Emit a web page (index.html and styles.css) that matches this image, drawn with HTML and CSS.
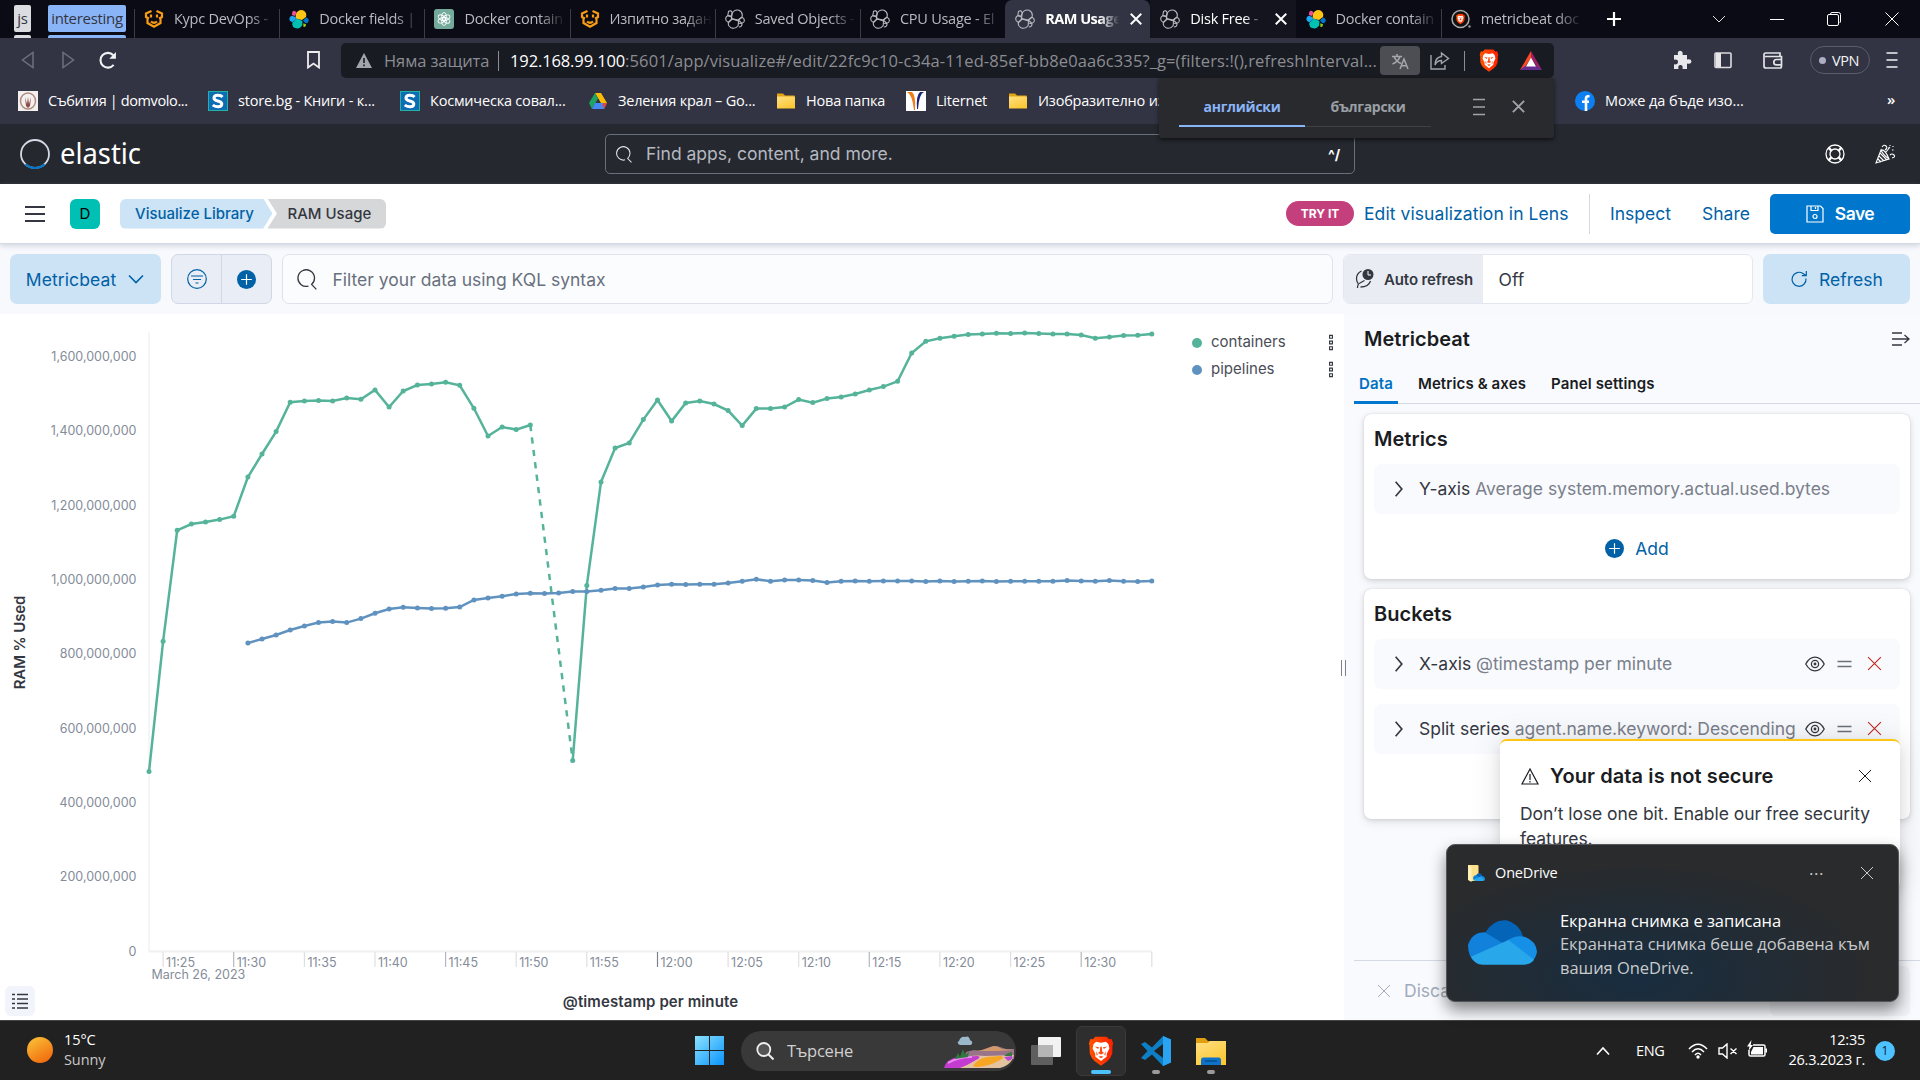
FILE: index.html
```html
<!DOCTYPE html>
<html lang="bg">
<head>
<meta charset="utf-8">
<title>RAM Usage - Elastic</title>
<link rel="stylesheet" href="styles.css">
</head>
<body>
<svg class="defs" width="0" height="0">
  <defs>
    <linearGradient id="gBrave" x1="0" y1="0" x2="1" y2="0"><stop offset="0" stop-color="#ff5500"/><stop offset="1" stop-color="#ff2000"/></linearGradient>
    <linearGradient id="gFolder" x1="0" y1="0" x2="0.6" y2="1"><stop offset="0" stop-color="#ffe083"/><stop offset="1" stop-color="#fcc834"/></linearGradient>
    <linearGradient id="gWin" x1="0" y1="0" x2="1" y2="1"><stop offset="0" stop-color="#8be2ff"/><stop offset="1" stop-color="#0a94fb"/></linearGradient>
    <symbol id="x" viewBox="0 0 16 16"><path d="M2 2l12 12M14 2L2 14" fill="none" stroke="currentColor"/></symbol>
    <symbol id="softuni" viewBox="0 0 20 20"><path d="M7.500 2L2 4.500V8L5 9.500M12.500 2L18 4.500V8L15 9.500M3.500 9.500V14L10 17.800 16.500 14V9.500M7 5.500V8.500M13 5.500V8.500M7 12.500Q10 15 13 12.500" fill="none" stroke="#f79c13" stroke-width="2.200"/></symbol>
    <symbol id="elastic" viewBox="0 0 20 20"><path d="M6.500 9.500L7 4.500Q9.500 0 14 1.200 18.300 3.200 17 8L13 11z" fill="#fec514"/><path d="M3.500 2.500Q6 .5 7.500 4L6 7 2.800 6Z" fill="#f04e98"/><path d="M.3 10Q.5 7.300 3 6.800L6.500 8 7 10.500 3.200 13.300Q.5 12.500.3 10" fill="#1ba9f5"/><path d="M3.500 13.500L8 9.500 13.500 12 13.200 16.500Q10.500 20.500 6 19 2.500 17.500 3.500 13.500" fill="#00bfb3"/><path d="M14 11.500L17 8.500Q20 9.500 19.700 12 19 14.500 16.500 14.200z" fill="#0077cc"/><path d="M14.200 14.200L17 15.200Q17.200 18 14.500 18z" fill="#93c90e"/></symbol>
    <symbol id="elasticline" viewBox="0 0 20 20"><g fill="none" stroke="#b8b9bf" stroke-width="1.100"><path d="M6.500 9.500L7 4.500Q9.500 0 14 1.200 18.300 3.200 17 8L13 11z"/><path d="M3.500 2.500Q6 .5 7.300 4L6.500 7 2.800 6.500Z"/><path d="M.7 10Q.8 7.300 3 6.800L6.500 8 7 10 3.200 13.300Q.8 12.500.7 10"/><path d="M3.500 13.500L7 10 13.500 12 13.200 16.500Q10.500 20.500 6 18.800 2.500 17 3.500 13.500"/><path d="M13.500 11.200L17 8.300Q19.700 9.500 19.300 12 19 14.200 16.500 14z"/><path d="M13.500 14.200L17 14.500Q17.200 17.800 13.800 18"/></g></symbol>
    <symbol id="lion" viewBox="0 0 20 24"><path d="M5.500.5h9L16.500 2.500l2-.2L19.700 6l-.5 1.500L19 14q-1 3.500-4 6.200L10 23.700 5 20.200Q2 17.500 1 14L.800 7.500.300 6 1.500 2.300l2 .2z" fill="url(#gBrave)"/><path d="M4 6.500L6 4.500l4 .8 4-.8 2 2 .7 3.500-2 4-.2 2.500-4.500 3.500-4.500-3.500-.2-2.500-2-4z" fill="#fff"/><path d="M5 8.300l3.500.6-.8 1.500zM15 8.300l-3.500.6.8 1.500zM9.400 8.500h1.200l.4 4 1.500 1-2.500 1.200-2.500-1.200 1.500-1zM6 12l1.500 3-1 .5zM14 12l-1.500 3 1 .5zM8 16.500l2 1.200 2-1.200-2-.6z" fill="#ff4a12"/></symbol>
    <symbol id="folder" viewBox="0 0 20 20"><path d="M1 2.500h6l2 2h9.500V11H1z" fill="#e3a411"/><path d="M1 5.500h18V17.500H1z" fill="url(#gFolder)"/></symbol>
    <symbol id="sbg" viewBox="0 0 20 20"><rect width="20" height="20" fill="#1fb4a6"/><rect x="1" y="1" width="18" height="18" fill="#0e6cb5"/><path d="M14.500 6Q13 4.200 10 4.200 6 4.200 6 7q0 2.200 3.800 3 4 .8 4 3 0 2.700-4 2.700-3.200 0-5-1.700" fill="none" stroke="#fff" stroke-width="3"/></symbol>
    <symbol id="search" viewBox="0 0 16 16"><path d="M9.500 13A6.300 6.300 0 1 1 11.800 11.800M11.500 11.300L15.500 15.500" fill="none" stroke="currentColor"/></symbol>
    <symbol id="plusc" viewBox="0 0 16 16"><circle cx="8" cy="8" r="8" fill="#0061a6"/><path d="M8 3.500v9M3.500 8h9" stroke="#fff"/></symbol>
    <symbol id="eye" viewBox="0 0 20 20"><g fill="none" stroke="currentColor" stroke-width="1.300"><path d="M.8 10Q4.500 3.200 10 3.200T19.200 10Q15.500 16.800 10 16.800T.8 10z"/><circle cx="10" cy="10" r="3.600"/><circle cx="10" cy="10" r=".8"/></g></symbol>
    <symbol id="grab" viewBox="0 0 16 16"><path d="M1 5.500h14M1 10.500h14" stroke="#69707d" stroke-width="1.700"/></symbol>
    <symbol id="chev" viewBox="0 0 16 16"><path d="M5 1.500l5.500 6.500L5 14.500" fill="none" stroke="currentColor" stroke-width="1.500"/></symbol>
    <symbol id="boxes" viewBox="0 0 6 18"><path d="M1.500 1.500h3v3h-3zM1.500 7.500h3v3h-3zM1.500 13.500h3v3h-3z" fill="none" stroke="#343741" stroke-width="1.200"/></symbol>
    <symbol id="cloud" viewBox="0 0 70 46"><path d="M17 14Q25 0 39 1 52 4 56 18L40 32 12 28z" fill="#0364b8"/><path d="M42 28L17 13Q4 13 0 26 0 38 7 43L50 34z" fill="#1181dc"/><path d="M39 22Q49 15 58 18 69 22 70 33 69 39 65 43L50 36z" fill="#1590e6"/><path d="M3 38L41 21 67 41Q63 46 57 46H15Q7 46 3 38" fill="#28a8ea"/></symbol>
  </defs>
</svg>

<header class="browser">
  <div class="tabstrip">
    <div class="group group-js"><span>js</span></div>
    <div class="group group-int"><span>interesting</span></div>
    <div class="tabs">
      <div class="tab"><svg><use href="#softuni"/></svg><span>Курс DevOps - </span></div>
      <div class="tab"><svg><use href="#elastic"/></svg><span>Docker fields | M</span></div>
      <div class="tab"><svg viewBox="0 0 20 20"><rect width="20" height="20" rx="3" fill="#74aa9c"/><g fill="none" stroke="#fff" stroke-width=".9"><ellipse cx="10" cy="7.500" rx="2.400" ry="4"/><ellipse cx="10" cy="7.500" rx="2.400" ry="4" transform="rotate(60 10 10)"/><ellipse cx="10" cy="7.500" rx="2.400" ry="4" transform="rotate(120 10 10)"/><ellipse cx="10" cy="7.500" rx="2.400" ry="4" transform="rotate(180 10 10)"/><ellipse cx="10" cy="7.500" rx="2.400" ry="4" transform="rotate(240 10 10)"/><ellipse cx="10" cy="7.500" rx="2.400" ry="4" transform="rotate(300 10 10)"/></g></svg><span>Docker contain</span></div>
      <div class="tab"><svg><use href="#softuni"/></svg><span>Изпитно задан</span></div>
      <div class="tab"><svg><use href="#elasticline"/></svg><span>Saved Objects -</span></div>
      <div class="tab"><svg><use href="#elasticline"/></svg><span>CPU Usage - El</span></div>
      <div class="tab active"><svg><use href="#elasticline"/></svg><span>RAM Usage</span><svg class="close"><use href="#x"/></svg></div>
      <div class="tab hover"><svg><use href="#elasticline"/></svg><span>Disk Free -</span><svg class="close"><use href="#x"/></svg></div>
      <div class="tab"><svg><use href="#elastic"/></svg><span>Docker contain</span></div>
      <div class="tab"><svg viewBox="0 0 20 20"><circle cx="9.500" cy="10" r="8.500" fill="#111" stroke="#aaa" stroke-width="1.500"/><use href="#lion" x="5" y="4.500" width="9" height="11"/><circle cx="18.500" cy="17.500" r="1.200" fill="#999"/></svg><span>metricbeat doc</span></div>
    </div>
    <svg class="newtab" viewBox="0 0 16 16"><path d="M8 1v14M1 8h14" stroke="#fff" stroke-width="2.200"/></svg>
    <div class="winctl">
      <svg viewBox="0 0 16 16"><path d="M2 5l6 6 6-6" fill="none" stroke="#ddd"/></svg>
      <svg viewBox="0 0 16 16"><path d="M1 8.500h14" stroke="#fff"/></svg>
      <svg viewBox="0 0 16 16"><path d="M4.500 3.500V3q0-1.500 1.500-1.500h6.500q2 0 2 2V10q0 1.500-1 2" fill="none" stroke="#fff"/><rect x="1.500" y="3.500" width="11" height="11" rx="1.500" fill="none" stroke="#fff"/></svg>
      <svg viewBox="0 0 16 16"><path d="M1.500 1.500l13 13M14.500 1.500l-13 13" stroke="#fff"/></svg>
    </div>
  </div>

  <div class="toolbar">
    <svg class="nav" viewBox="0 0 16 18"><path d="M13 1.500v15L2.500 9z" fill="none" stroke="#6d6f7b" stroke-width="1.500"/></svg>
    <svg class="nav fwd" viewBox="0 0 16 18"><path d="M3 1.500v15L13.500 9z" fill="none" stroke="#6d6f7b" stroke-width="1.500"/></svg>
    <svg class="reload" viewBox="0 0 18 18"><path d="M14.800 13.200A7 7 0 1 1 14.500 4" fill="none" stroke="#f2f2f5" stroke-width="2"/><path d="M17 1v6.300h-6.300z" fill="#f2f2f5"/></svg>
    <svg class="bm" viewBox="0 0 14 18"><path d="M1.500 1h11v15.500L7 12.500l-5.500 4z" fill="none" stroke="#eee" stroke-width="1.800"/></svg>
    <div class="omni">
      <svg class="warn" viewBox="0 0 16 15"><path d="M8 0l8 15H0z" fill="#a2a5ab"/><path d="M8 5v5M8 11.500v1.800" stroke="#191b22" stroke-width="1.600"/></svg>
      <span class="nosec">Няма защита</span><i class="bar"></i>
      <span class="url"><b>192.168.99.100</b>:5601/app/visualize#/edit/22fc9c10-c34a-11ed-85ef-bb8e0aa6c335?_g=(filters:!(),refreshInterval...</span>
      <span class="trans"><svg viewBox="0 0 18 18"><path d="M1 4.500h10M6 2v2.500M3 4.500Q5 9.500 10 11.500M9 4.500Q7.500 9.500 1.500 12M9 17l4-10 4 10M10.500 13.700h5" fill="none" stroke="#a6a7ab" stroke-width="1.500"/></svg></span>
      <svg class="share" viewBox="0 0 20 20"><path d="M1 4v14h14v-4M11.500 2l7 5.500-7 5V9.500Q7 9.500 5 14 5 6.500 11.500 5.500z" fill="none" stroke="#a2a4aa" stroke-width="1.400"/></svg>
      <i class="bar b2"></i>
      <svg class="lion"><use href="#lion"/></svg>
      <svg class="bat" viewBox="0 0 22 19"><path d="M11 0L0 19l5-3 6-9z" fill="#ff4724"/><path d="M11 0l11 19-5-3-6-9z" fill="#9e1f63"/><path d="M0 19h22l-5-4H5z" fill="#662d91"/><path d="M11 6.500l5 9H6z" fill="#fff"/></svg>
    </div>
    <div class="ext">
      <svg viewBox="0 0 20 20"><path d="M2 5h4q-1-4 2-4.300 3.500.3 2.500 4.300H15v4.500q4-1.200 4.500 2-.5 3.300-4.500 2V19h-4.500q.8-4-2-4-3 0-2 4H2v-4.700q4 .5 4-2.300T2 9.700z" fill="#e8e8ec"/></svg>
      <svg viewBox="0 0 20 20"><rect x="2" y="3" width="16" height="14.500" rx="1" fill="none" stroke="#dcdce0" stroke-width="1.600"/><path d="M3 3h5v14H3z" fill="#e6e6ea"/></svg>
      <svg viewBox="0 0 20 20"><path d="M17 6V3H2.500Q1 3 1 5v11q0 2 2 2h14q1.500 0 1.500-2V6.500H2M19 9.500h-5.500a2.700 2.700 0 0 0 0 5.400H19" fill="none" stroke="#e3e3e8" stroke-width="1.700"/></svg>
      <span class="vpn"><i></i>VPN</span>
      <svg class="menu" viewBox="0 0 12 18"><path d="M.5 2h11M.5 9h11M.5 16h11" stroke="#f2f2f5" stroke-width="1.500"/></svg>
    </div>
  </div>

  <div class="bookmarks">
    <div style="width:190px"><svg viewBox="0 0 20 20"><rect width="20" height="20" fill="#f4f0ee"/><ellipse cx="10" cy="10" rx="7.500" ry="8" fill="none" stroke="#b08d88" stroke-width="1.500"/><path d="M7 6l2 7 1-7 1 7 2-7-1 9-2 2-2-2z" fill="#8a4d48"/></svg><span class="tight">Събития | domvolo...</span></div>
    <div style="width:192px"><svg><use href="#sbg"/></svg><span>store.bg - Книги - к...</span></div>
    <div style="width:188px"><svg><use href="#sbg"/></svg><span>Космическа совал...</span></div>
    <div style="width:188px"><svg viewBox="0 0 20 20"><path d="M7 2h6l6 10h-6z" fill="#fbbc04"/><path d="M7 2l3 5.500L4 18l-3-6z" fill="#1ea362"/><path d="M4 18l3-6h12l-3 6z" fill="#4688f4"/><path d="M16 18l3-6h-3.500l-1 1.500z" fill="#ea4335"/></svg><span>Зеления крал – Go...</span></div>
    <div style="width:130px"><svg><use href="#folder"/></svg><span>Нова папка</span></div>
    <div style="width:102px"><svg viewBox="0 0 20 20"><rect width="20" height="20" fill="#fff"/><path d="M1 1q5 2 7 18h1Q10 4 6 1z" fill="#ef7d1a"/><path d="M18 1q-5 2-6 17h-1Q10 4 14 1z" fill="#1c2577"/></svg><span>Liternet</span></div>
    <div style="width:567px"><svg><use href="#folder"/></svg><span>Изобразително из</span></div>
    <div style="width:312px"><svg viewBox="0 0 20 20"><circle cx="10" cy="10" r="10" fill="#0c7ff2"/><path d="M14.500 5.300H13q-2 0-2 2.200V20M7 10.800h7" fill="none" stroke="#fff" stroke-width="2.600"/></svg><span class="wide">Може да бъде изо...</span></div>
    <b>»</b>
  </div>

  <div class="translate">
    <span class="lang on">английски</span><span class="lang">български</span>
    <svg class="tmenu" viewBox="0 0 14 18"><path d="M1 1.500h12M1 9h12M1 16.500h12" stroke="#a0a3a8" stroke-width="1.500"/></svg>
    <svg class="tclose"><use href="#x"/></svg>
  </div>
</header>

<section class="kheader">
  <svg class="ring" viewBox="0 0 30 30"><circle cx="15" cy="15" r="14" fill="none" stroke="#d3dae6" stroke-width="1.800"/><path d="M5.500 25.300A14 14 0 0 0 24.500 25.300" fill="none" stroke="#07c" stroke-width="2.200"/></svg>
  <svg class="word" width="84" height="40"><text x="0" y="30" textLength="81" lengthAdjust="spacingAndGlyphs">elastic</text></svg>
  <div class="ksearch"><svg><use href="#search"/></svg><span>Find apps, content, and more.</span><b>^/</b></div>
  <div class="kicons">
    <svg viewBox="0 0 20 20"><g fill="none" stroke="#fff" stroke-width="1.300"><circle cx="10" cy="10" r="9"/><circle cx="10" cy="10" r="5"/><path d="M4 3l3 4M3 4l3 3M16 3l-3 4M17 4l-3 3M4 17l3-4M3 16l3-3M16 17l-3-4M17 16l-3-3"/></g></svg>
    <svg viewBox="0 0 20 20"><g fill="none" stroke="#fff" stroke-width="1.100"><path d="M1 19L6 6q2 5 8 9zM4 12l5 5M5 9l7 7M3 15l3 3M6 6q4-1 8 9M7 3q2-3 4-1t-1 4M11 8l4-5M15 11q2-2 4 0t-2 3"/><path d="M15 1v1M18 2v1M17 6h2M13 4h1" stroke-dasharray="1.500 1"/></g></svg>
  </div>
</section>

<section class="knav">
  <svg class="burger" viewBox="0 0 20 18"><path d="M0 2h20M0 9h20M0 16h20" stroke="#343741" stroke-width="2"/></svg>
  <span class="avatar">D</span>
  <div class="crumbs"><a class="c1">Visualize Library</a><a class="c2">RAM Usage</a></div>
  <span class="tryit">TRY IT</span>
  <a class="edit">Edit visualization in Lens</a><i class="vsep"></i>
  <a class="insp">Inspect</a><a class="shr">Share</a>
  <button class="save"><svg viewBox="0 0 18 18"><path d="M1 1h13.500L17 3.500V17H1zM5 1v4.500h7V1M9.500 2v2" fill="none" stroke="#fff" stroke-width="1.200"/><circle cx="9" cy="11.500" r="2" fill="none" stroke="#fff" stroke-width="1.200"/></svg>Save</button>
</section>

<section class="query">
  <button class="dv">Metricbeat<svg viewBox="0 0 16 16"><path d="M1 4.500l7 7 7-7" fill="none" stroke="currentColor" stroke-width="1.600"/></svg></button>
  <div class="fgroup"><span><svg viewBox="0 0 20 20"><g fill="none" stroke="#0061a6" stroke-width="1.200"><circle cx="10" cy="10" r="9.300"/><path d="M4 7h12M6 10.500h8M8.500 14h3"/></g></svg></span><span><svg class="pl"><use href="#plusc"/></svg></span></div>
  <div class="kql"><svg><use href="#search"/></svg>Filter your data using KQL syntax</div>
  <div class="auto"><span><svg viewBox="0 0 18 20"><circle cx="12.500" cy="5.500" r="5.500" fill="#343741"/><path d="M12.500 2v4h3" fill="none" stroke="#fff"/><path d="M6 2Q1 4.500 1 9.500q0 3 1.500 5M2 19q0-4 2.500-5L9 11.500M5 18q8 0 10-6" fill="none" stroke="#343741" stroke-width="1.300"/></svg>Auto refresh</span><em>Off</em></div>
  <button class="refresh"><svg viewBox="0 0 18 18"><path d="M16 8.500a7 7 0 1 1-3-5L16 5.500M16.300 1v4.700h-4.500" fill="none" stroke="currentColor" stroke-width="1.200"/></svg>Refresh</button>
</section>

<main class="body">
  <div class="vis">
    <svg id="chart" width="1180" height="706"></svg>
    <div class="legend">
      <div><i></i><span>containers</span><svg><use href="#boxes"/></svg></div>
      <div><i class="blue"></i><span>pipelines</span><svg><use href="#boxes"/></svg></div>
    </div>
    <div class="listbtn"><svg viewBox="0 0 16 16"><path d="M0 1.500h3M5 1.500h11M0 6h3M5 6h11M0 10.500h3M5 10.500h11M0 15h3M5 15h11" stroke="#343741" stroke-width="1.300"/></svg></div>
    <i class="handle"></i>
  </div>
  <aside class="side">
    <div class="sidehead"><h2>Metricbeat</h2><svg viewBox="0 0 18 16"><path d="M0 2h10M0 8h16M0 14h10M12.500 4l4.500 4-4.500 4" fill="none" stroke="#343741" stroke-width="1.300"/></svg></div>
    <nav class="stabs"><a class="on">Data</a><a>Metrics &amp; axes</a><a>Panel settings</a></nav>
    <div class="panel p1">
      <h3>Metrics</h3>
      <div class="row"><svg class="cv"><use href="#chev"/></svg><span>Y-axis <em>Average system.memory.actual.used.bytes</em></span></div>
      <div class="add"><svg><use href="#plusc"/></svg>Add</div>
    </div>
    <div class="panel p2">
      <h3>Buckets</h3>
      <div class="row"><svg class="cv"><use href="#chev"/></svg><span>X-axis <em>@timestamp per minute</em></span><svg class="ey"><use href="#eye"/></svg><svg class="gr"><use href="#grab"/></svg><svg class="rx"><use href="#x"/></svg></div>
      <div class="row r2"><svg class="cv"><use href="#chev"/></svg><span>Split series <em>agent.name.keyword: Descending</em></span><svg class="ey"><use href="#eye"/></svg><svg class="gr"><use href="#grab"/></svg><svg class="rx"><use href="#x"/></svg></div>
    </div>
    <footer class="sfoot"><svg><use href="#x"/></svg><span>Discard</span><i></i></footer>
  </aside>
</main>

<div class="toast">
  <div class="thead"><svg class="tw" viewBox="0 0 18 17"><path d="M9 1l8 15H1zM9 6v6M9 13v1.500" fill="none" stroke="#1a1c21" stroke-width="1.200"/></svg><b>Your data is not secure</b><svg class="tx"><use href="#x"/></svg></div>
  <p>Don’t lose one bit. Enable our free security features.</p>
</div>

<div class="onedrive">
  <div class="ohead"><svg viewBox="0 0 17 18"><path d="M0 1h9.500q1 0 1 1v15H2z" fill="#ffe08a"/><path d="M0 1l3.500 2v15L0 16z" fill="#fff0b8"/><use href="#cloud" x="5" y="9" width="12" height="8"/></svg><span>OneDrive</span><i>···</i><svg class="ox"><use href="#x"/></svg></div>
  <div class="obody"><svg><use href="#cloud"/></svg><p><b>Екранна снимка е записана</b><br>Екранната снимка беше добавена към<br>вашия OneDrive.</p></div>
</div>

<footer class="taskbar">
  <i class="sun"></i><div class="wx">15°C<br><em>Sunny</em></div>
  <svg class="start" viewBox="0 0 29 29"><path d="M0 0h14v14H0zM15 0h14v14H15zM0 15h14v14H0zM15 15h14v14H15z" fill="url(#gWin)"/></svg>
  <div class="tsearch"><svg class="mag" viewBox="0 0 18 18"><circle cx="7.800" cy="7.500" r="6.500" fill="#555" stroke="#eee" stroke-width="1.800"/><path d="M12.500 12.500l5 5" stroke="#eee" stroke-width="2"/></svg><span>Търсене</span>
    <svg class="scene" viewBox="0 0 70 32"><path d="M15 5q2-5 6-4 4-2 5 3 4 2 1 5H16q-4-2-1-4" fill="#9cb8cb"/><path d="M22 16l8-2 6 1 10-4q5-2 10 0l6 2 8 0v10H20z" fill="#9a7488"/><path d="M32 15l6-1 12-4q4 0 8 3l12 1-16 1z" fill="#d29a6b"/><path d="M5 26q18-8 36-6l29-1-2 5q-4 6-12 8H2z" fill="#e3c3a0"/><path d="M0 32q2-9 14-11l20-1q4 1-2 4Q24 29 16 32z" fill="#c33bd0"/><path d="M4 27q10-6 24-6" stroke="#ed8ef2" stroke-width="2" fill="none"/><path d="M29 30q4-7 14-9l14-1q5 1-1 4-12 7-24 7z" fill="#f6a623"/><path d="M11 23l3-6 2 4 3-8 2 6 4-3-1 5z" fill="#2f7a3f"/><path d="M60 21l8-1q2 3-4 5z" fill="#b848d6"/><path d="M60 20l4-3 4-1v4z" fill="#3a7a40"/></svg>
  </div>
  <svg class="tv" viewBox="0 0 30 28"><rect x="7" width="23" height="20" rx="1" fill="#f2f2f2"/><rect y="8" width="22" height="20" rx="1" fill="#666" fill-opacity=".9"/><path d="M7 8h15v12H7z" fill="#b5b5b5"/></svg>
  <div class="app act"><svg class="l"><use href="#lion"/></svg><i></i></div>
  <div class="app"><svg viewBox="0 0 30 30"><path d="M22 0l8 3.500v23L22 30 11 18.500 4 24 0 22l6.500-7L0 8l4-2 7 5.500z" fill="#0d7fc7"/><path d="M22 8v14l-9-7z" fill="#212121"/><path d="M22 0l8 3.500v23L22 30z" fill="#2aa4f0"/></svg><i></i></div>
  <div class="app"><svg viewBox="0 0 30 28"><path d="M0 1h9l3 3h4v8H0z" fill="#e09f10"/><path d="M0 6h12l2-2h16v24H0z" fill="url(#gFolder)"/><path d="M5 28v-5q0-2.500 2-2.500h16q2 0 2 2.500v5z" fill="#0d72c8"/><path d="M9 24h12" stroke="#04467f" stroke-width="1.200"/></svg><i></i></div>
  <div class="tray">
    <svg class="up" viewBox="0 0 14 10"><path d="M1 8.500l6-6.500 6 6.500" fill="none" stroke="#fff" stroke-width="1.600"/></svg>
    <span class="eng">ENG</span>
    <svg class="wifi" viewBox="0 0 20 16"><g fill="none" stroke="#fff" stroke-width="1.500"><path d="M1 6q9-9.500 18 0M4 9q6-6.500 12 0M7 12q3-3.500 6 0"/></g><circle cx="10" cy="14" r="1.700" fill="#fff"/></svg>
    <svg class="vol" viewBox="0 0 20 16"><path d="M1 5h3.500L9 1v14L4.500 11H1zM12.500 5.500l6 5.500M18.500 5.500l-6 5.500" fill="none" stroke="#fff" stroke-width="1.400"/></svg>
    <svg class="bt" viewBox="0 0 20 18"><path d="M6 5h10.500q1.500 0 1.500 1.500v8q0 1.500-1.500 1.500H3.500Q2 16 2 14.500V10" fill="none" stroke="#fff" stroke-width="1.500"/><path d="M6.500 7H16v7.500H4V12zM18.500 8.500H20v4h-1.500zM4.500 0L0 6.500h2.500L1.500 11 6 5H3.700z" fill="#fff"/></svg>
    <div class="clock">12:35<br>26.3.2023 г.</div>
    <span class="badge">1</span>
  </div>
</footer>
<script src="chart.js"></script>
</body>
</html>
```
FILE: styles.css
```css
* { box-sizing: border-box; }
body { margin: 0; width: 1920px; height: 1080px; overflow: hidden; font-family: Inter, sans-serif; font-size: 17.5px; color: #343741; background: #fff; display: flex; flex-direction: column; position: relative; }
svg { flex: none; display: block; }
i, em { font-style: normal; }
.defs { position: absolute; }
button { border: 0; padding: 0; font: inherit; display: flex; align-items: center; justify-content: center; }
h2, h3, p { margin: 0; }

/* browser chrome */
.browser, .taskbar, .onedrive { font-family: "Open Sans", "Noto Sans", sans-serif; }
.browser { height: 124px; background: #323443; position: relative; flex: none; }
.tabstrip { height: 38px; background: #0b0b15; display: flex; padding-left: 14px; }
.group { margin-top: 5px; height: 33px; font-size: 15px; color: #33353f; letter-spacing: -.3px; text-align: center; }
.group span { display: block; height: 27px; line-height: 26px; border-radius: 2px; margin-bottom: 3px; }
.group::after { content: ""; display: block; height: 3px; border-radius: 2px 2px 0 0; }
.group-js { width: 17px; margin-right: 17px; }
.group-js span, .group-js::after { background: #dadce0; }
.group-int { width: 78px; margin-right: 8px; }
.group-int span, .group-int::after { background: #8ab4f8; }
.tabs { display: flex; width: 1452px; }
.tab { width: 145.2px; height: 38px; display: flex; align-items: center; padding-left: 10px; position: relative; color: #b9bac2; font-size: 14.5px; letter-spacing: -.25px; }
.tab::before { content: ""; position: absolute; left: 0; top: 9px; bottom: 0; width: 1px; background: #3c3c46; }
.tab svg { width: 20px; height: 20px; margin-right: 10px; }
.tab span { width: 104px; padding-bottom: 1px; white-space: nowrap; -webkit-mask-image: linear-gradient(90deg, #000 72%, transparent 98%); mask-image: linear-gradient(90deg, #000 72%, transparent 98%); }
.tab.active { background: #323443; border-radius: 7px 7px 0 0; color: #fff; font-weight: 700; letter-spacing: -.5px; }
.tab.hover { background: #14141f; color: #fff; }
.tab.active::before, .tab.hover::before, .tab.hover + .tab::before { display: none; }
.tab.active span, .tab.hover span { width: 76px; }
.tab .close { width: 14px; height: 14px; margin: 0 0 0 8px; color: #fff; stroke-width: 2.2; }
.newtab { width: 16px; height: 16px; margin: 11px 0 0 20px; }
.winctl { display: flex; margin: 11px 0 0 89px; gap: 41.5px; }
.winctl svg { width: 16px; height: 16px; }

.toolbar { height: 44px; display: flex; align-items: center; padding-left: 20px; }
.nav { width: 16px; height: 18px; }
.nav.fwd { margin-left: 24px; }
.reload { width: 19px; height: 19px; margin-left: 22px; }
.bm { width: 15px; height: 18px; margin-left: 189px; }
.omni { width: 1213px; height: 35px; margin-left: 20px; margin-top: 1px; background: #191b22; border-radius: 5px; display: flex; align-items: center; font-size: 16.5px; padding-left: 15px; color: #8b8d93; white-space: nowrap; }
.warn { width: 16px; height: 15px; }
.nosec { margin-left: 12px; width: 105px; letter-spacing: -.08px; }
.bar { width: 1px; height: 20px; background: #8b8d93; margin: 0 11px 0 9px; }
.url { width: 870px; letter-spacing: .11px; }
.url b { font-weight: 400; color: #fff; letter-spacing: -.12px; }
.trans { width: 40px; height: 29px; border-radius: 4px; background: #4d4e54; display: flex; align-items: center; justify-content: center; }
.trans svg { width: 18px; height: 18px; }
.share { width: 20px; height: 20px; margin-left: 10px; }
.b2 { margin: 0 14px 0 14px; }
.omni .lion { width: 20px; height: 23px; }
.bat { width: 22px; height: 19px; margin-left: 21px; }
.ext { display: flex; align-items: center; margin-left: 118px; }
.ext svg { width: 20px; height: 20px; margin-right: 21px; }
.ext svg:nth-child(2) { margin-right: 30px; }
.ext svg:nth-child(3) { margin-right: 27px; }
.vpn { width: 60px; height: 28px; border: 1px solid #595b6e; border-radius: 14px; display: flex; align-items: center; font-size: 14.5px; color: #f4f4f6; letter-spacing: -.4px; }
.vpn i { width: 7px; height: 7px; border-radius: 50%; background: #adadc4; margin: 0 6px 0 8px; }
.ext .menu { width: 12px; height: 18px; margin: 0 0 0 16px; }

.bookmarks { height: 42px; display: flex; align-items: center; padding: 0 0 5px 18px; font-size: 14.5px; color: #fff; white-space: nowrap; letter-spacing: -.2px; }
.bookmarks div { display: flex; align-items: center; gap: 10px; }
.bookmarks svg { width: 20px; height: 20px; }
.bookmarks span { padding-bottom: 1px; }
.bookmarks .tight { letter-spacing: -.38px; }
.bookmarks .wide { letter-spacing: -.05px; }
.bookmarks b { font-size: 15px; font-weight: 600; padding-bottom: 3px; }
.translate { position: absolute; left: 1159px; top: 78px; width: 395px; height: 60px; background: #292a2d; box-shadow: 0 2px 4px #0009; border-radius: 0 0 3px 3px; display: flex; padding-left: 20px; font-size: 14px; font-weight: 700; z-index: 3; letter-spacing: -.3px; }
.lang { width: 126px; height: 49px; line-height: 58px; text-align: center; color: #9aa0a6; border-bottom: 1px solid #404145; }
.lang.on { color: #8ab4f8; border-bottom: 2px solid #8ab4f8; }
.tmenu { width: 14px; height: 18px; margin: 20px 0 0 41px; }
.tclose { width: 15px; height: 15px; margin: 21px 0 0 25px; color: #a0a3a8; stroke-width: 2; }

/* elastic header */
.kheader { height: 60px; background: #25282f; display: flex; align-items: center; padding-left: 20px; flex: none; }
.ring { width: 30px; height: 30px; }
.word { margin-left: 10px; font-family: "Noto Sans", sans-serif; font-size: 29px; fill: #fff; }
.ksearch { margin-left: 461px; width: 750px; height: 40px; border: 1px solid #69707d; border-radius: 5px; display: flex; align-items: center; color: #b4b8c0; padding-left: 9px; }
.ksearch svg { width: 17px; height: 17px; color: #dfe5ef; }
.ksearch span { margin-left: 14px; width: 682px; padding-bottom: 1px; }
.ksearch b { color: #fff; font-size: 14px; }
.kicons { display: flex; margin-left: 470px; gap: 30px; }
.kicons svg { width: 20px; height: 20px; }

.knav { height: 60px; border-bottom: 1px solid #d3dae6; box-shadow: 0 2px 5px #98a2b366; display: flex; align-items: center; padding-left: 25px; flex: none; position: relative; z-index: 1; background: #fff; }
.burger { width: 20px; height: 18px; }
.avatar { width: 30px; height: 30px; margin-left: 25px; border-radius: 6px; background: #00bfb3; color: #000; font-size: 15px; line-height: 30px; text-align: center; }
.crumbs { display: flex; margin-left: 20px; width: 266px; font-size: 15px; font-weight: 450; letter-spacing: 0; line-height: 30px; }
.c1 { background: #cce4f5; color: #0061a6; width: 153px; padding-left: 15px; border-radius: 6px 0 0 6px; clip-path: polygon(0 0, 94% 0, 100% 50%, 94% 100%, 0 100%); }
.c2 { background: #d6d7d9; color: #343741; width: 119px; margin-left: -5px; padding-left: 20px; border-radius: 0 6px 6px 0; clip-path: polygon(0 0, 100% 0, 100% 100%, 0 100%, 8% 50%); }
.tryit { margin-left: 900px; width: 68px; height: 25px; border-radius: 13px; background: #c4407c; color: #fff; font-size: 12px; font-weight: 700; line-height: 25px; text-align: center; }
.knav > a { color: #0061a6; white-space: nowrap; }
.edit { margin-left: 10px; width: 225px; letter-spacing: .08px; }
.vsep { width: 1px; height: 40px; background: #d3dae6; margin-right: 20px; }
.insp { width: 92px; }
.shr { width: 68px; }
.save { width: 140px; height: 40px; background: #0077cc; color: #fff; border-radius: 5px; font-weight: 600; gap: 11px; letter-spacing: -.5px; }
.save svg { width: 18px; height: 18px; }

.query { height: 70px; background: #f8f9fd; display: flex; padding: 10px; gap: 10px; flex: none; }
.query > * { height: 50px; border-radius: 7px; }
.dv { width: 151px; background: #cce3f5; color: #0061a6; gap: 12px; letter-spacing: .1px; padding-right: 1px; }
.dv svg { width: 16px; height: 16px; }
.fgroup { width: 101px; background: #e9edf5; border: 1px solid #d0d7e6; display: flex; }
.fgroup span { flex: 1; display: flex; align-items: center; justify-content: center; }
.fgroup span + span { border-left: 1px solid #d0d7e6; }
.fgroup svg { width: 20px; height: 20px; }
.fgroup .pl { width: 19px; height: 19px; }
.kql { width: 1051px; border: 1px solid #dde2ee; background: #fbfcfe; display: flex; align-items: center; padding-left: 13px; gap: 15.5px; color: #69707d; }
.kql svg { width: 21px; height: 21px; color: #343741; }
.auto { width: 410px; border: 1px solid #e3e7f0; background: #fff; display: flex; align-items: center; overflow: hidden; }
.auto span { width: 139px; height: 48px; background: #e9edf3; display: flex; align-items: center; padding-left: 11px; gap: 10px; font-size: 15px; font-weight: 600; letter-spacing: -.12px; white-space: nowrap; }
.auto svg { width: 19px; height: 20px; }
.auto em { margin-left: 15.5px; }
.refresh { width: 147px; background: #cce3f5; color: #0061a6; gap: 11px; }
.refresh svg { width: 18px; height: 18px; }

/* body */
.body { display: flex; height: 706px; flex: none; }
.vis { width: 1344px; position: relative; display: flex; }
#chart text { font-size: 12.5px; fill: #848c99; }
#chart .title { font-size: 15px; font-weight: 600; fill: #343741; letter-spacing: .1px; }
#chart .ytitle { letter-spacing: -.1px; }
.legend { padding-top: 14px; width: 160px; font-size: 15px; color: #4a4d57; }
.legend div { display: flex; align-items: center; height: 27px; padding-left: 12px; }
.legend i { width: 10px; height: 10px; border-radius: 50%; background: #54b399; margin: 2px 9px 0 0; }
.legend i.blue { background: #6092c0; }
.legend span { width: 117px; }
.legend svg { width: 6px; height: 17px; margin-top: 2px; }
.listbtn { position: absolute; left: 5px; top: 672px; width: 30px; height: 30px; border-radius: 6px; background: #f1f4fb; display: flex; align-items: center; justify-content: center; }
.listbtn svg { width: 16px; height: 16px; }
.handle { position: absolute; left: 1341px; top: 346px; width: 5px; height: 16px; border: solid #7d828d; border-width: 0 1px; z-index: 2; }
.side { width: 576px; background: #f9fafe; display: flex; flex-direction: column; padding: 0 10px 0 10px; }
.sidehead { display: flex; justify-content: space-between; align-items: center; height: 50px; padding-left: 10px; }
h2, h3 { font-size: 20px; font-weight: 600; color: #1a1c21; line-height: 24px; letter-spacing: .05px; }
.sidehead svg { width: 18px; height: 16px; }
.stabs { display: flex; height: 40px; border-bottom: 1px solid #d3dae6; margin-right: -10px; font-size: 15px; font-weight: 600; color: #1a1c21; line-height: 40px; }
.stabs a { padding: 0 5px; margin-right: 15px; height: 40px; letter-spacing: .12px; }
.stabs .on { color: #0071c2; border-bottom: 3px solid #07c; }
.panel { margin-left: 10px; width: 546px; background: #fff; border-radius: 7px; box-shadow: 0 1px 5px #0000001a, 0 4px 10px #00000014, 0 0 1px #0003; padding: 0 10px; flex: none; }
.p1 { margin-top: 10px; height: 165px; }
.p2 { margin-top: 10px; height: 230px; }
.panel h3 { padding-top: 13px; height: 50px; }
.row { height: 50px; background: #f9fafd; border-radius: 7px; display: flex; align-items: center; padding-left: 16px; color: #343741; white-space: nowrap; }
.row em { color: #7a808c; }
.row > span { width: 386px; margin-left: 11px; letter-spacing: -.02px; padding-bottom: 1px; }
.cv { width: 18px; height: 18px; margin-bottom: 1px; }
.ey { width: 20px; height: 20px; margin-bottom: 1px; }
.gr { width: 17px; height: 16px; margin-left: 11px; margin-bottom: 1px; }
.rx { width: 17px; height: 17px; margin-left: 13px; margin-bottom: 1px; color: #bd271e; }
.r2 { margin-top: 15px; }
.add { height: 68px; display: flex; align-items: center; justify-content: center; gap: 11px; color: #0061a6; }
.add svg { width: 19px; height: 19px; }
.sfoot { margin: auto 0 0; height: 60px; border-top: 1px solid #d3dae6; margin-right: -10px; display: flex; align-items: center; padding-left: 22px; color: #a2abba; }
.sfoot svg { width: 16px; height: 16px; margin-right: 12px; }
.sfoot i { margin-left: auto; margin-right: 10px; width: 140px; height: 50px; background: #f1f2f7; border-radius: 6px; }

.toast { position: absolute; left: 1500px; top: 739px; width: 400px; height: 150px; background: #fff; border-top: 2px solid #fec514; border-radius: 7px; box-shadow: 0 0 30px #0000001f, 0 5px 12px #00000014; padding: 19px 20px; }
.thead { display: flex; align-items: center; height: 32px; color: #1a1c21; font-size: 20px; white-space: nowrap; }
.thead b { width: 307px; margin-left: 11px; font-weight: 600; letter-spacing: .1px; }
.tw { width: 18px; height: 17px; margin-left: 1px; }
.tx { width: 16px; height: 16px; }
.toast p { margin-top: 9px; line-height: 25px; letter-spacing: -.05px; }

.onedrive { position: absolute; left: 1446px; top: 844px; width: 453px; height: 158px; border: 1px solid #55565a; border-radius: 9px; background: radial-gradient(ellipse 230px 110px at 190px 130px, #182d40, transparent), #292b2d; box-shadow: 0 8px 16px #0007; color: #fff; padding: 0 21px; }
.ohead { display: flex; align-items: center; height: 56px; font-size: 14.5px; letter-spacing: -.15px; }
.ohead svg { width: 17px; height: 20px; }
.ohead span { margin-left: 10px; width: 314px; padding-bottom: 1px; }
.ohead i { color: #ccc; width: 37px; font-size: 17px; letter-spacing: .5px; }
.ohead .ox { width: 16px; height: 16px; margin-left: 12.5px; color: #ccc; }
.obody { display: flex; margin-top: 8px; font-size: 16.5px; line-height: 23.5px; color: #c8cacc; white-space: nowrap; }
.obody svg { width: 69px; height: 46px; margin-top: 10px; }
.obody p { margin-left: 23px; letter-spacing: -.05px; margin-top: -.5px; }
.obody b { font-weight: 400; color: #fff; }

.taskbar { height: 60px; background: #222121; border-top: 1px solid #454443; display: flex; align-items: center; padding-left: 27px; color: #fff; font-size: 14.5px; flex: none; }
.sun { width: 26px; height: 26px; border-radius: 50%; background: linear-gradient(150deg, #fbc63a, #ef5f08); margin-bottom: 2px; }
.wx { margin-left: 11px; width: 631px; line-height: 20px; letter-spacing: -.1px; padding-bottom: 2px; }
.wx em { color: #c8c8c8; }
.start { width: 29px; height: 29px; }
.tsearch { width: 275px; height: 40px; border-radius: 20px; background: #3a3939; margin-left: 17px; display: flex; align-items: center; padding-left: 15px; overflow: hidden; font-size: 16.5px; color: #d0d0d0; }
.mag { width: 18px; height: 18px; }
.tsearch span { margin-left: 13px; width: 157px; letter-spacing: -.2px; }
.scene { width: 70px; height: 32px; margin-top: 2px; }
.tv { width: 30px; height: 28px; margin: 0 15px; }
.app { width: 50px; height: 50px; margin-right: 5px; border-radius: 6px; display: flex; flex-direction: column; align-items: center; padding-top: 10px; }
.app svg { width: 30px; height: 30px; }
.app .l { width: 26px; }
.app i { margin-top: 4px; width: 8px; height: 4px; border-radius: 2px; background: #9a9a9a; }
.act { background: #2e2e2e; border: 1px solid #3a3a3a; padding-top: 9px; }
.act i { width: 20px; background: #4cc2ff; }
.tray { display: flex; align-items: center; margin-left: 355px; }
.up { width: 14px; height: 10px; }
.eng { margin-left: 26px; width: 52px; letter-spacing: -.3px; }
.wifi { width: 20px; height: 16px; }
.vol { width: 20px; height: 16px; margin-left: 10px; }
.bt { width: 20px; height: 18px; margin-left: 9px; margin-top: -3px; }
.clock { width: 98px; text-align: right; line-height: 20px; letter-spacing: -.25px; white-space: nowrap; padding-bottom: 2px; }
.badge { width: 20px; height: 20px; border-radius: 50%; background: #4cc2ff; color: #123; font-size: 12px; line-height: 20px; text-align: center; margin-left: 10px; }
```
FILE: chart.js
```js
// Plot area in page pixels relative to the chart's own top-left corner.
const TOP = 314, X0 = 149, STEP = 14.124, BASE = 951.3;
const containers = [771.3,641,530,523.7,521.7,519.3,516,476.7,453.7,431.3,402,400.7,400.3,400.7,397.7,399,389.7,406.7,390.7,384.7,383.7,382,385,408,435.7,426.7,429.3,424.7,null,null,760.3,585.3,481.7,447.7,442.7,419.3,399.7,420.7,402.7,400.7,403.7,410.3,425.3,408.3,408.3,406.7,399.3,402.3,398.3,396.7,393.7,389.7,386.3,381,352.7,341,338,336,334.3,333.7,333,333.3,332.7,333.3,333.7,333.7,334.7,338,336.7,335.3,335,333.7];
const pipelines = [null,null,null,null,null,null,null,642.7,638.7,634.7,629.7,625.7,622.3,621.3,622.3,618.3,613,608.7,607,607.7,608.3,608,606.7,599.7,597.7,596,593.7,593,593.3,592.7,591.3,591.3,590,588.3,588.3,586.7,584.7,584,584.3,584,584,582.7,581,579,581,579.7,579.7,580.3,582.3,581,580.7,581,580.7,580.7,580.7,581.3,580.7,581.3,581,580.7,581.3,581,581,581,581,580.3,580.7,581,580.3,581,581.3,580.7];
const px = i => (X0 + i * STEP).toFixed(1);
const py = y => (y - TOP + 0.3).toFixed(1);
let out = '';
const line = (x1, y1, x2, y2, c, extra = '') => { out += `<line x1="${x1}" y1="${y1}" x2="${x2}" y2="${y2}" stroke="${c}" ${extra}/>`; };
const text = (x, y, s, extra = '') => { out += `<text x="${x}" y="${y}" ${extra}>${s}</text>`; };

line(149, 18, 149, 637, '#eaecf0');
line(149, 637.5, 1152, 637.5, '#eff0f2', 'stroke-width="2"');
for (let v = 0; v <= 8; v++) {
  text(136.5, BASE - TOP - v * 74.33 + 4.2, (v * 2e8).toLocaleString('en-US'), 'text-anchor="end"');
}
for (let k = 0; k <= 14; k++) {
  const m = 25 + k * 5, x = px(1 + k * 5);
  line(x, 638, x, 653, m === 60 ? '#7d828c' : m % 15 === 0 ? '#b4b7bd' : '#dedfe2', 'stroke-width="1.2"');
  if (k < 14) text(+x + 3, 652.5, `${m < 60 ? 11 : 12}:${String(m % 60).padStart(2, '0')}`);
}
text(151.5, 665, 'March 26, 2023');
text(650.5, 693, '@timestamp per minute', 'class="title" text-anchor="middle"');
text(0, 0, 'RAM % Used', 'class="title ytitle" text-anchor="middle" transform="translate(25 328.500) rotate(-90)"');

function series(data, color) {
  let d = '', pen = false, last = null, dots = '';
  data.forEach((y, i) => {
    if (y === null) { pen = false; return; }
    if (!pen && last !== null) line(px(last), py(data[last]), px(i), py(y), color, 'stroke-width="2.5" stroke-dasharray="6.250 6.250"');
    d += `${pen ? 'L' : 'M'}${px(i)} ${py(y)}`;
    dots += `<circle cx="${px(i)}" cy="${py(y)}" r="2.500" fill="${color}"/>`;
    pen = true; last = i;
  });
  out += `<path d="${d}" fill="none" stroke="${color}" stroke-width="2.500"/>${dots}`;
}
series(containers, '#54b399');
series(pipelines, '#6092c0');
document.getElementById('chart').innerHTML = out;
```
